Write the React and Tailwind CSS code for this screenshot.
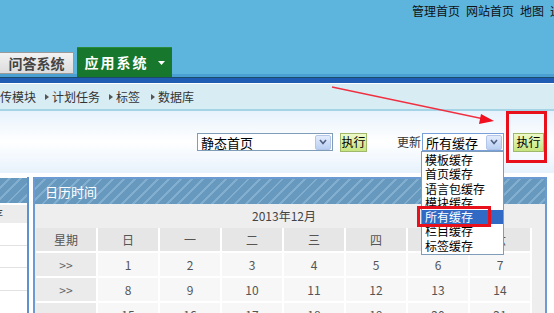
const font = { fontFamily: '"Noto Sans CJK SC", "Liberation Sans", sans-serif' }

function Chevron() {
  return (
    <span className="flex h-[15px] w-[16px] items-center justify-center rounded-[2px] border border-[#b3c6ea] bg-linear-to-b from-[#e3ecfb] to-[#b9cff3]">
      <svg width="8" height="6" viewBox="0 0 8 6">
        <polyline points="1,1 4,4.5 7,1" fill="none" stroke="#4d6185" strokeWidth="1.6" />
      </svg>
    </span>
  )
}

function FakeSelect({ value, width, focused }) {
  return (
    <div
      className={`flex h-[18px] items-center justify-between border bg-white pl-[3px] pr-[1px] ${
        focused ? 'border-[#7aa0dc]' : 'border-[#7f9db9]'
      }`}
      style={{ width }}
    >
      <span className="whitespace-nowrap text-[13px] leading-none text-black">{value}</span>
      <Chevron />
    </div>
  )
}

function RunButton({ className = '' }) {
  return (
    <div
      className={`flex h-[19px] shrink-0 items-center justify-center whitespace-nowrap border border-[#9fb86a] bg-linear-to-b from-[#eefac8] to-[#c6e47e] text-[12px] leading-none text-black ${className}`}
    >
      执行
    </div>
  )
}

const stripes =
  'bg-[repeating-linear-gradient(135deg,#6799bf_0px,#6799bf_6px,#82afd0_6px,#82afd0_8px)]'

const menuItems = ['模板缓存', '首页缓存', '语言包缓存', '模块缓存', '所有缓存', '栏目缓存', '标签缓存']
const weekHead = ['星期', '日', '一', '二', '三', '四', '五', '六']
const weeks = [
  [1, 2, 3, 4, 5, 6, 7],
  [8, 9, 10, 11, 12, 13, 14],
  [15, 16, 17, 18, 19, 20, 21],
]

export default function App() {
  return (
    <div className="relative h-[313px] w-[554px] overflow-hidden bg-white" style={font}>
      {/* Top header */}
      <div className="flex h-[77px] flex-col justify-between bg-[#5db4dc]">
        <div className="whitespace-nowrap pl-[412px] pt-[2px] text-[12px] leading-[18px] text-[#111]">
          <span>管理首页</span>
          <span className="ml-[6px]">网站首页</span>
          <span className="ml-[6px]">地图</span>
          <span className="ml-[6px]">退出</span>
        </div>
        <div className="relative flex items-end">
          <div className="absolute bottom-0 left-0 right-0 h-[3px] bg-[#4aa0d2]" />
          <div className="relative mb-[3px] flex h-[22px] w-[74px] items-center justify-center border border-l-0 border-[#9a9a9a] bg-linear-to-b from-[#f2f2f2] to-[#dcdcdc] text-[14px] font-bold text-[#444]">
            问答系统
          </div>
          <div className="relative ml-[3px] flex h-[30px] w-[95px] items-center justify-center gap-[9px] border-t border-[#2a8a3a] bg-[#17772c] text-[14px] font-bold tracking-[2px] text-white">
            <span>应用系统</span>
            <svg width="7" height="4" viewBox="0 0 7 4">
              <polygon points="0,0 7,0 3.5,4" fill="#fff" />
            </svg>
          </div>
        </div>
      </div>
      <div className="h-[1px] bg-[#1d4c6a]" />
      <div className="h-[5px] bg-[#1f5db5]" />
      <div className="h-[1px] bg-white" />

      {/* Sub nav */}
      <div className="flex h-[25px] items-center whitespace-nowrap bg-[#d8ecf4] text-[12px] text-[#333]">
        <span>传模块</span>
        {['计划任务', '标签', '数据库'].map((t, i) => (
          <span key={t} className={`flex items-center ${i === 2 ? 'ml-[11px]' : 'ml-[9px]'}`}>
            <svg width="4" height="6" viewBox="0 0 4 6" className="mr-[3px]">
              <polygon points="0,0 4,3 0,6" fill="#555" />
            </svg>
            {t}
          </span>
        ))}
      </div>
      <div className="h-[2px] bg-[#a6d4e7]" />

      {/* Toolbar */}
      <div className="flex h-[62px] items-center bg-linear-to-b from-[#e7f2fc] via-white to-[#e7f2fc] pl-[197px]">
        <FakeSelect value="静态首页" width={136} />
        <RunButton className="ml-[7px] w-[27px]" />
        <span className="ml-[30px] whitespace-nowrap text-[12px] text-[#333]">更新</span>
        <div className="ml-[1px]">
          <FakeSelect value="所有缓存" width={82} focused />
        </div>
        <RunButton className="ml-[9px] w-[31px]" />
      </div>

      {/* Panels */}
      <div className="mt-[4px] flex">
        <div className="w-[29px] shrink-0 border-r-2 border-[#5f92cc] pt-[1px]">
          <div className={`h-[25px] ${stripes}`} />
          <div className="mt-[2px] h-[18px] overflow-hidden bg-[#ececec] text-[12px] leading-[18px] text-[#444]">
            <span className="ml-[-9px]">存</span>
          </div>
          <div className="h-[23px] border-b border-[#e2e2e2]" />
          <div className="h-[22px] border-b border-[#e2e2e2]" />
          <div className="h-[23px] border-b border-[#e2e2e2]" />
        </div>

        <div className="ml-[4px] w-[514px] shrink-0 border-2 border-b-0 border-[#6b9bd2]">
          <div className={`flex h-[25px] items-center pl-[10px] text-[13px] text-white ${stripes}`}>日历时间</div>
          <div className="bg-[#eeeeee] pl-[1px] pr-[13px]">
            <div className="flex h-[24px] items-center justify-center text-[12px] text-[#444]">2013年12月</div>
            <div className="grid grid-cols-[repeat(8,60px)] gap-[2px] bg-white text-[12px] text-[#555]">
              {weekHead.map((h) => (
                <div key={h} className="flex h-[23px] items-center justify-center bg-[#e6e6e6]">
                  {h}
                </div>
              ))}
              {weeks.map((w) => [
                <div key={`s${w[0]}`} className="flex h-[23px] items-center justify-center bg-[#ebebeb] text-[#666]">
                  &gt;&gt;
                </div>,
                ...w.map((d) => (
                  <div key={d} className="flex h-[23px] items-center justify-center bg-[#f7f7f7]">
                    {d}
                  </div>
                )),
              ])}
            </div>
          </div>
        </div>
      </div>

      {/* Open dropdown list */}
      <div className="absolute left-[421px] top-[151px] w-[83px] border border-[#7f9db9] bg-white py-[1px] text-[12px] text-black">
        {menuItems.map((m) => (
          <div
            key={m}
            className={`h-[14.3px] overflow-hidden whitespace-nowrap pl-[3px] leading-[14.3px] ${
              m === '所有缓存' ? 'bg-[#316ac5] text-white' : ''
            }`}
          >
            {m}
          </div>
        ))}
      </div>

      {/* Red annotations */}
      <div className="absolute left-[417px] top-[206px] h-[21px] w-[74px] border-[3px] border-[#e8101a]" />
      <div className="absolute left-[506px] top-[111px] h-[52px] w-[41px] border-[3px] border-[#e8101a]" />
      <svg className="absolute left-0 top-0" width="554" height="313">
        <line x1="332" y1="87" x2="484" y2="119" stroke="#f03040" strokeWidth="1.3" />
        <polygon points="494,121 481,114 479,124" fill="#f01020" />
      </svg>
    </div>
  )
}
